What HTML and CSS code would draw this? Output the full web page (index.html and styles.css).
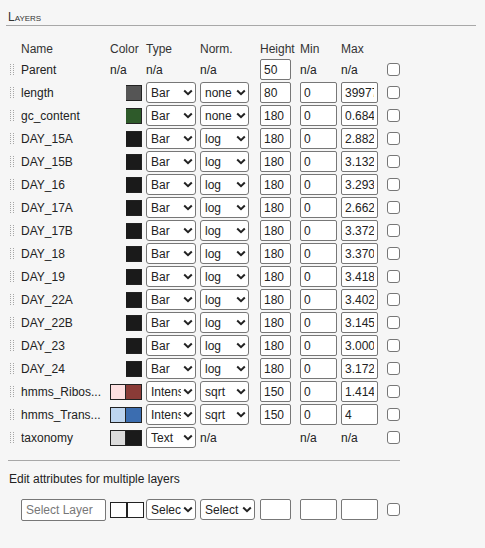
FILE: index.html
```html
<!DOCTYPE html>
<html>
<head>
<meta charset="utf-8">
<link rel="stylesheet" href="styles.css">
</head>
<body>
<div class="panel">
  <div class="title">Layers</div>

  <div class="grid head">
    <span></span><span>Name</span><span>Color</span><span>Type</span><span>Norm.</span><span>Height</span><span>Min</span><span>Max</span><span></span>
  </div>

  <div class="grid row">
    <span class="handle"><svg width="4" height="12" viewBox="0 0 4 12"><g fill="#a6a6a6"><rect x="0" y="0" width="1" height="1"/><rect x="3" y="0" width="1" height="1"/><rect x="0" y="2" width="1" height="1"/><rect x="3" y="2" width="1" height="1"/><rect x="0" y="4" width="1" height="1"/><rect x="3" y="4" width="1" height="1"/><rect x="0" y="6" width="1" height="1"/><rect x="3" y="6" width="1" height="1"/><rect x="0" y="8" width="1" height="1"/><rect x="3" y="8" width="1" height="1"/><rect x="0" y="10" width="1" height="1"/><rect x="3" y="10" width="1" height="1"/></g></svg></span>
    <span class="name">Parent</span><span>n/a</span><span>n/a</span><span>n/a</span>
    <span><input class="in h" value="50"></span><span>n/a</span><span>n/a</span>
    <span><input type="checkbox" class="cb"></span>
  </div>

  <div id="rows"></div>

  <div class="sep"></div>
  <div class="edit-title">Edit attributes for multiple layers</div>
  <div class="grid row bottom">
    <span></span>
    <span><input class="in layer" placeholder="Select Layer"></span>
    <span class="swatches"><i class="sw" style="background:#fff"></i><i class="sw" style="background:#fff"></i></span>
    <span><span class="sel"><select class="type"><option>Select</option></select><svg class="chev" width="10" height="7" viewBox="0 0 10 7"><polyline points="1.2,1.5 5,5.2 8.8,1.5" fill="none" stroke="#222" stroke-width="2"/></svg></span></span>
    <span><span class="sel"><select class="norm wide"><option>Select</option></select><svg class="chev" width="10" height="7" viewBox="0 0 10 7"><polyline points="1.2,1.5 5,5.2 8.8,1.5" fill="none" stroke="#222" stroke-width="2"/></svg></span></span>
    <span><input class="in h"></span>
    <span><input class="in m"></span>
    <span><input class="in m"></span>
    <span><input type="checkbox" class="cb"></span>
  </div>
</div>
<script src="script.js"></script>
</body>
</html>
```
FILE: script.js
```js
var layers = [
  ["length", ["#555555"], "Bar", "none", "80", "0", "39977"],
  ["gc_content", ["#2e5a2a"], "Bar", "none", "180", "0", "0.684"],
  ["DAY_15A", ["#1a1a1a"], "Bar", "log", "180", "0", "2.882"],
  ["DAY_15B", ["#1a1a1a"], "Bar", "log", "180", "0", "3.132"],
  ["DAY_16", ["#1a1a1a"], "Bar", "log", "180", "0", "3.293"],
  ["DAY_17A", ["#1a1a1a"], "Bar", "log", "180", "0", "2.662"],
  ["DAY_17B", ["#1a1a1a"], "Bar", "log", "180", "0", "3.372"],
  ["DAY_18", ["#1a1a1a"], "Bar", "log", "180", "0", "3.370"],
  ["DAY_19", ["#1a1a1a"], "Bar", "log", "180", "0", "3.418"],
  ["DAY_22A", ["#1a1a1a"], "Bar", "log", "180", "0", "3.402"],
  ["DAY_22B", ["#1a1a1a"], "Bar", "log", "180", "0", "3.145"],
  ["DAY_23", ["#1a1a1a"], "Bar", "log", "180", "0", "3.000"],
  ["DAY_24", ["#1a1a1a"], "Bar", "log", "180", "0", "3.172"],
  ["hmms_Ribos...", ["#fde0e1", "#8a3b37"], "Intensity", "sqrt", "150", "0", "1.414"],
  ["hmms_Trans...", ["#bdd5ef", "#3b6db0"], "Intensity", "sqrt", "150", "0", "4"],
  ["taxonomy", ["#dcdcdc", "#1a1a1a"], "Text", null, null, null, null]
];
var handle = '<span class="handle"><svg width="4" height="12" viewBox="0 0 4 12"><g fill="#a6a6a6">';
for (var y = 0; y <= 10; y += 2) { handle += '<rect x="0" y="' + y + '" width="1" height="1"/><rect x="3" y="' + y + '" width="1" height="1"/>'; }
handle += '</g></svg></span>';
var chev = '<svg class="chev" width="10" height="7" viewBox="0 0 10 7"><polyline points="1.2,1.5 5,5.2 8.8,1.5" fill="none" stroke="#222" stroke-width="2"/></svg>';
var html = '';
layers.forEach(function (l) {
  var sw = '<span class="swatches">';
  if (l[1].length === 1) sw += '<i class="sw blank"></i>';
  l[1].forEach(function (c) { sw += '<i class="sw" style="background:' + c + '"></i>'; });
  sw += '</span>';
  html += '<div class="grid row">' + handle +
    '<span class="name">' + l[0] + '</span>' + sw +
    '<span><span class="sel"><select class="type"><option>' + l[2] + '</option></select>' + chev + '</span></span>';
  if (l[3]) {
    html += '<span><span class="sel"><select class="norm"><option>' + l[3] + '</option></select>' + chev + '</span></span>' +
      '<span><input class="in h" value="' + l[4] + '"></span>' +
      '<span><input class="in m" value="' + l[5] + '"></span>' +
      '<span><input class="in m" value="' + l[6] + '"></span>';
  } else {
    html += '<span>n/a</span><span></span><span>n/a</span><span>n/a</span>';
  }
  html += '<span><input type="checkbox" class="cb"></span></div>';
});
document.getElementById('rows').innerHTML = html;
```
FILE: styles.css
```css
html, body {
  margin: 0;
  padding: 0;
}
body {
  background: #f6f6f6;
  font-family: "Liberation Sans", Arial, sans-serif;
  font-size: 12px;
  color: #222;
}
.panel {
  padding: 10px 9px 0 6px;
}
.title {
  font-variant: small-caps;
  line-height: 14px;
  padding: 0 0 1px 2px;
  border-bottom: 1px solid #a8a8a8;
  color: #333;
}
.grid {
  display: grid;
  grid-template-columns: 13px 89px 36px 54px 60px 40px 41px 46px 13px;
  margin-left: 2px;
  align-items: center;
}
.head {
  margin-top: 15px;
  height: 17px;
  line-height: 17px;
  color: #333;
}
.row {
  height: 23px;
}
.handle {
  display: flex;
  align-items: center;
  padding-left: 2px;
}
.name {
  white-space: nowrap;
  overflow: hidden;
}
.swatches {
  display: flex;
}
.sw {
  display: block;
  width: 14px;
  height: 14px;
  border: 1px solid #222;
}
.sw + .sw {
  border-left: none;
  width: 15px;
}
.sw.blank {
  border-color: transparent;
  visibility: hidden;
}
.sel {
  position: relative;
  display: inline-block;
  height: 21px;
  vertical-align: top;
}
select {
  appearance: none;
  -webkit-appearance: none;
  box-sizing: border-box;
  height: 21px;
  margin: 0;
  border: 1px solid #777;
  border-radius: 3px;
  background: #fff;
  font-family: "Liberation Sans", Arial, sans-serif;
  font-size: 12px;
  color: #222;
  padding: 0 14px 0 4px;
  display: block;
}
select.type { width: 50px; }
select.norm { width: 49px; }
select.norm.wide { width: 55px; }
.chev {
  position: absolute;
  right: 3px;
  top: 7px;
  pointer-events: none;
}
.in {
  box-sizing: border-box;
  height: 21px;
  margin: 0;
  border: 1px solid #777;
  border-radius: 2px;
  background: #fff;
  font-family: "Liberation Sans", Arial, sans-serif;
  font-size: 12px;
  color: #222;
  padding: 0 3px;
  display: block;
}
.in.h { width: 31px; }
.in.m { width: 37px; }
.in.layer { width: 85px; height: 22px; padding-left: 4px; }
.in::placeholder { color: #777; }
.cb {
  appearance: none;
  -webkit-appearance: none;
  box-sizing: border-box;
  width: 13px;
  height: 13px;
  margin: 0;
  border: 1px solid #777;
  border-radius: 3px;
  background: #fff;
  display: block;
}
.sep {
  margin: 11px 0 0 2px;
  width: 392px;
  border-top: 1px solid #a8a8a8;
}
.edit-title {
  margin: 11px 0 0 3px;
  line-height: 14px;
  color: #222;
}
.bottom {
  margin-top: 12px;
}
.bottom .sw {
  width: 15px;
}
.bottom .sw + .sw {
  width: 15px;
  border-left: 1px solid #222;
}
```
